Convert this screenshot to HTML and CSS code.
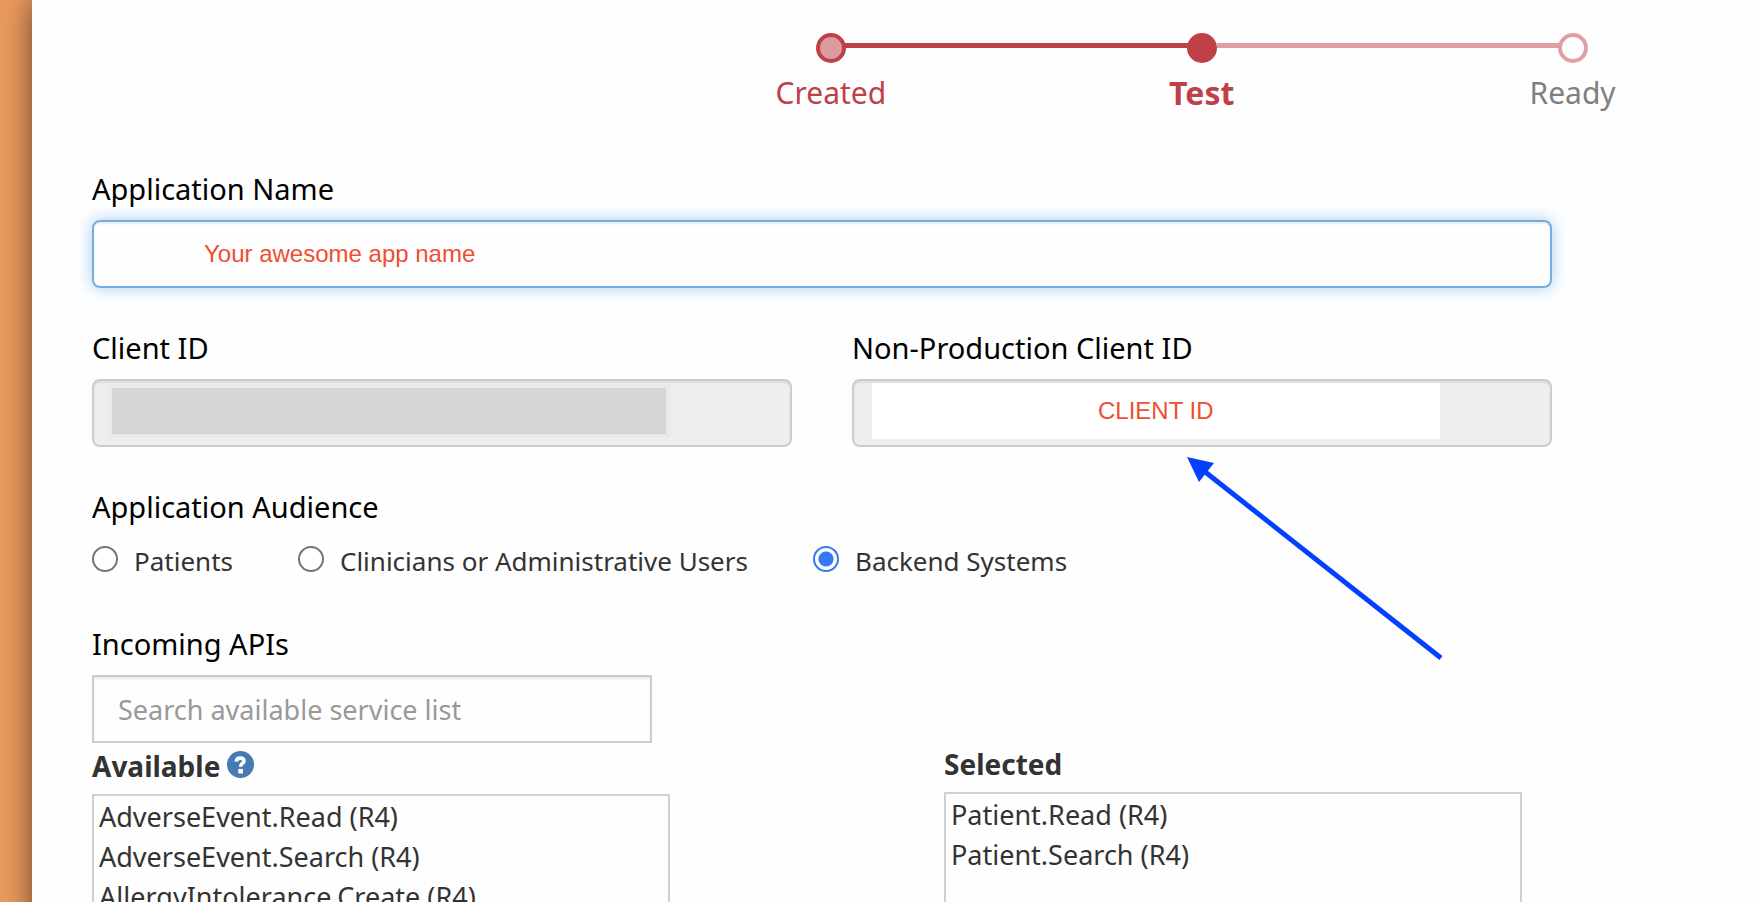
FILE: index.html
```html
<!DOCTYPE html>
<html lang="en">
<head>
<meta charset="utf-8">
<title>Application</title>
<link rel="stylesheet" href="styles.css">
</head>
<body>
<main class="page">
  <ol class="steps">
    <li class="step step-done"><span class="step-mark"></span><span class="step-label">Created</span></li>
    <li class="step step-current" aria-current="step"><span class="step-mark"></span><span class="step-label">Test</span></li>
    <li class="step step-todo"><span class="step-mark"></span><span class="step-label">Ready</span></li>
  </ol>

  <form class="form">
    <div class="group">
      <label class="label" for="app-name">Application Name</label>
      <input class="control control-active" id="app-name" type="text" value="Your awesome app name">
    </div>

    <div class="pair">
      <div class="group">
        <label class="label" for="client-id">Client ID</label>
        <div class="control control-locked"><input class="value value-hidden" id="client-id" type="text" readonly></div>
      </div>
      <div class="group">
        <label class="label" for="test-client-id">Non-Production Client ID</label>
        <div class="control control-locked"><input class="value value-shown" id="test-client-id" type="text" value="CLIENT ID" readonly>
          <svg class="arrow" width="260" height="206" viewBox="0 0 260 206" aria-hidden="true">
            <path d="M18 14 255 201" stroke="#0540ff" stroke-width="5" fill="none"/>
            <path d="M1 0 28 6 13 25Z" fill="#0540ff"/>
          </svg>
        </div>
      </div>
    </div>

    <fieldset class="group audience">
      <legend class="label">Application Audience</legend>
      <div class="choices">
        <label class="choice"><input class="radio" type="radio" name="audience">Patients</label>
        <label class="choice"><input class="radio" type="radio" name="audience">Clinicians or Administrative Users</label>
        <label class="choice"><input class="radio" type="radio" name="audience" checked>Backend Systems</label>
      </div>
    </fieldset>

    <div class="group apis">
      <label class="label" for="api-search">Incoming APIs</label>
      <input class="control control-search" id="api-search" type="text" placeholder="Search available service list">
    </div>

    <div class="lists">
      <div class="list-group">
        <div class="list-head list-head-help">
          <label for="available">Available</label>
          <button class="help" type="button" aria-label="Help">
            <svg width="27" height="27" viewBox="0 0 27 27" aria-hidden="true">
              <circle cx="13.5" cy="13.5" r="13.5" fill="#467ab4"/>
              <path d="M9.200 10.600C9.400 7.900 11 7.100 13.300 7.100C15.700 7.100 17 8.200 17 10C17 12.500 13.500 12.300 13.500 15.800" fill="none" stroke="#fff" stroke-width="3.600"/>
              <path d="M11.300 17.900h4.600v4.600h-4.600z" fill="#fff"/>
            </svg>
          </button>
        </div>
        <select class="list" id="available" multiple size="6">
          <option>AdverseEvent.Read (R4)</option>
          <option>AdverseEvent.Search (R4)</option>
          <option>AllergyIntolerance.Create (R4)</option>
        </select>
      </div>
      <div class="list-group">
        <div class="list-head"><label for="selected">Selected</label></div>
        <select class="list" id="selected" multiple size="6">
          <option>Patient.Read (R4)</option>
          <option>Patient.Search (R4)</option>
        </select>
      </div>
    </div>
  </form>
</main>
</body>
</html>
```
FILE: styles.css
```css
* {
  box-sizing: border-box;
}

body {
  height: 100vh;
  margin: 0;
  overflow: hidden;
  background: #ea9a5e;
  color: #333;
  font: 27px/40px Tahoma, "Noto Sans", sans-serif;
}

.page {
  min-height: 100vh;
  margin-left: 32px;
  padding: 33px 0 0 60px;
  background: #fefefe;
  box-shadow: 0 0 28px rgba(0, 0, 0, 0.55);
}

/* Progress steps */

.steps {
  display: grid;
  grid-template-columns: repeat(3, 1fr);
  width: 66.7%;
  margin: 0 2px 0 auto;
  padding: 0;
  list-style: none;
  font-size: 30px;
  line-height: 44px;
}

.step {
  position: relative;
  display: flex;
  flex-direction: column;
  align-items: center;
  gap: 8px;
  color: #be4148;
}

.step-mark {
  z-index: 1;
  width: 30px;
  height: 30px;
  border: 4px solid #be4148;
  border-radius: 50%;
  background: #be4148;
}

.step-done .step-mark {
  background: #dc9ba0;
}

.step-current {
  font-size: 32px;
  font-weight: bold;
}

.step-todo {
  color: #808080;
}

.step-todo .step-mark {
  border-color: #dfa0a3;
  background: #fefefe;
}

.step + .step::before {
  content: "";
  position: absolute;
  top: 10px;
  right: 50%;
  width: 100%;
  height: 5px;
  background: #be4148;
}

.step + .step-todo::before {
  width: calc(100% - 15px);
  background: #dfa0a3;
}

/* Form */

.form {
  display: flex;
  flex-direction: column;
  gap: 37px;
  margin-right: 208px;
  padding-top: 51px;
}

.group {
  display: flex;
  flex-direction: column;
  gap: 8px;
}

.label {
  padding: 0;
  color: #000;
  font-size: 29px;
  line-height: 46px;
}

.pair {
  display: grid;
  grid-template-columns: 1fr 1fr;
  gap: 60px;
}

.control {
  width: 100%;
  height: 68px;
  border: 2px solid #ccc;
  border-radius: 8px;
  background: #fefefe;
  box-shadow: inset 0 2px 2px rgba(0, 0, 0, 0.075);
  outline: none;
}

.control-active {
  padding: 0 110px;
  border-color: #74ade3;
  box-shadow: inset 0 2px 2px rgba(0, 0, 0, 0.075), 0 0 16px rgba(102, 175, 233, 0.6);
  color: #f04e30;
  font: 24px "Liberation Sans", Arial, sans-serif;
}

.control-locked {
  position: relative;
  padding: 2px 18px;
  background: #eee;
}

.value {
  display: block;
  width: 86%;
  border: 0;
  outline: none;
  color: #f04e30;
  font: 24px "Liberation Sans", Arial, sans-serif;
  text-align: center;
}

.value-hidden {
  width: 84%;
  height: 46px;
  margin-top: 5px;
  background: #d5d5d5;
  box-shadow: 0 0 0 4px #eaeaea;
}

.value-shown {
  height: 56px;
  background: #fff;
}

.arrow {
  position: absolute;
  top: 76px;
  left: 332px;
}

.audience {
  display: block;
  min-width: 0;
  margin: 0;
  padding: 0;
  border: 0;
}

.choices {
  display: flex;
  gap: 65px;
  padding-top: 11px;
  font-size: 26px;
}

.choice {
  display: flex;
  gap: 16px;
}

.radio {
  appearance: none;
  width: 26px;
  height: 26px;
  margin: 5px 0 0;
  border: 2px solid #757575;
  border-radius: 50%;
  background: #fff;
}

.radio:checked {
  border-color: #3478f6;
  background: radial-gradient(circle, #3478f6 7px, #fff 8px);
}

.apis {
  padding-top: 3px;
}

.control-search {
  width: 560px;
  padding: 0 24px;
  border-radius: 0;
  color: #333;
  font: inherit;
}

.control-search::placeholder {
  color: #999;
}

/* Service lists */

.lists {
  display: grid;
  grid-template-columns: 578fr 578fr;
  align-items: start;
  gap: 274px;
  margin: -36px 30px 0 0;
}

.list-group {
  display: flex;
  flex-direction: column;
  gap: 8px;
}

.list-head {
  display: flex;
  align-items: flex-end;
  gap: 7px;
  font-size: 28px;
  font-weight: bold;
}

.list-head-help {
  padding-top: 2px;
}

.help {
  display: flex;
  padding: 0;
  margin-bottom: 8px;
  border: 0;
  background: none;
}

.list {
  width: 100%;
  padding: 2px 0;
  border: 2px solid #d0d0d0;
  border-radius: 0;
  background: #fefefe;
  color: #333;
  font: inherit;
  outline: none;
}

.list option {
  min-height: 40px;
  padding: 0 5px;
  line-height: 40px;
}
```
